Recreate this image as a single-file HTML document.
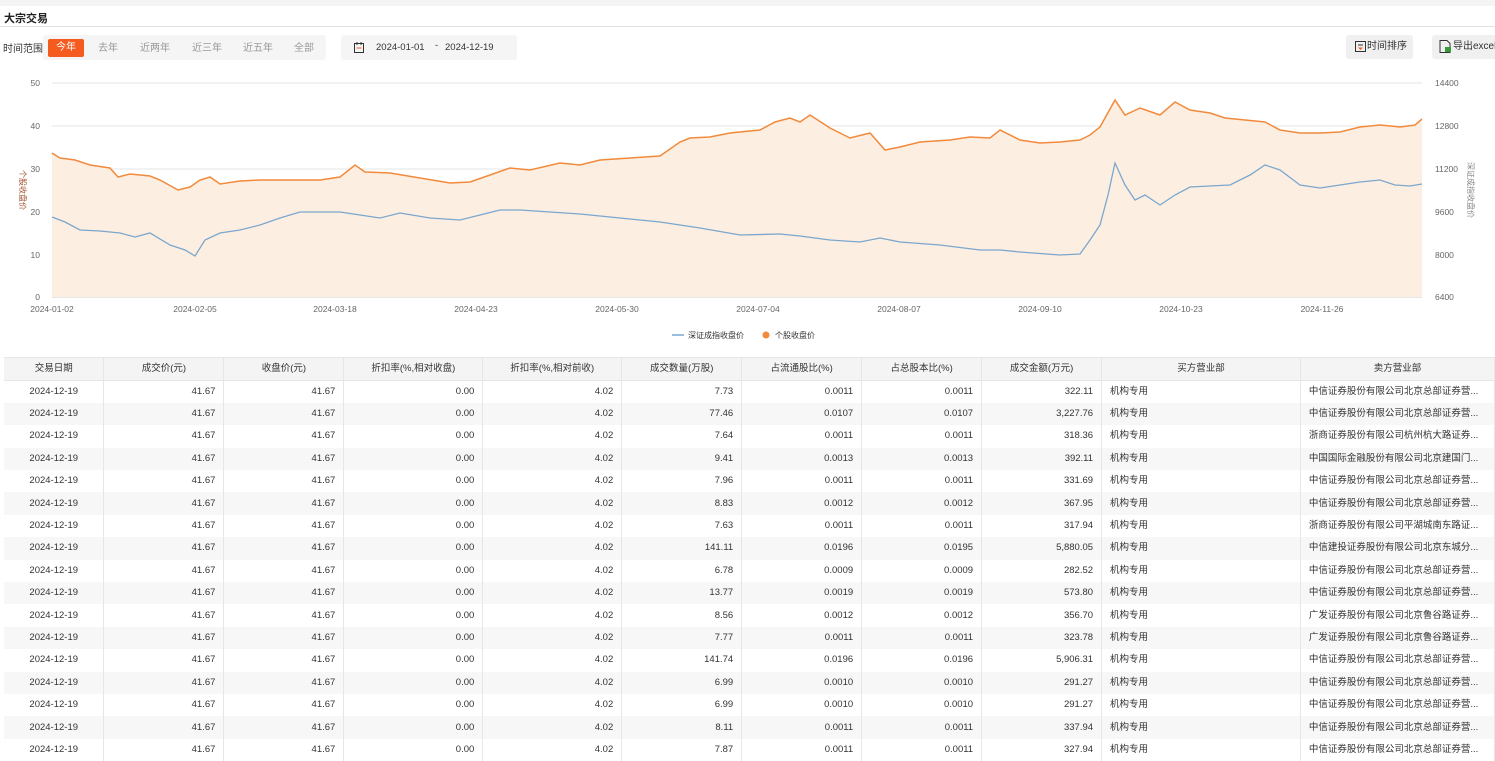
<!DOCTYPE html><html><head><meta charset="utf-8"><style>
body{margin:0;width:1495px;height:761px;overflow:hidden;background:#fff;font-family:"Liberation Sans","Noto Sans CJK SC",sans-serif;color:#333;position:relative}
.top{position:absolute;left:0;top:0;width:1495px;height:6px;background:#f4f4f4}
.title{position:absolute;left:4px;top:10px;font-size:11px;font-weight:bold;color:#222}
.hr{position:absolute;left:0;top:26px;width:1495px;height:1px;background:#e2e2e2}
.lbl{position:absolute;left:3px;top:40px;font-size:10px;color:#333}
.seg{position:absolute;left:43px;top:35px;width:283px;height:25px;background:#f5f5f5;border-radius:3px}
.seg span{position:absolute;top:8px;font-size:10px;color:#999;line-height:12px}
.seg .on{background:#f55a1e;color:#fff;border-radius:2px;top:4px;padding:3px 8px;left:5px}
.date{position:absolute;left:341px;top:35px;width:176px;height:25px;background:#f5f5f5;border-radius:3px;font-size:9.5px;color:#333}
.btn{position:absolute;top:35px;height:24px;background:#f0f0f0;border-radius:3px;font-size:10px;color:#333;line-height:24px}
table{position:absolute;left:4px;top:357px;border-collapse:collapse;font-size:9.5px;table-layout:fixed}
td,th{height:22.4px;line-height:12px;padding:0 8px;border-right:1px solid #e6e6e6;white-space:nowrap;overflow:hidden;vertical-align:middle;box-sizing:border-box}
th{font-weight:normal;background:#f4f4f4;color:#333;border-top:1px solid #e6e6e6;border-bottom:1px solid #e6e6e6;height:23px}
td{text-align:right}
td:first-child{text-align:center}
td:nth-child(10),td:nth-child(11){text-align:left}
tr:nth-child(odd) td{background:#f7f7f7}
</style></head><body>
<div class="top"></div><div class="title">大宗交易</div><div class="hr"></div>
<div class="lbl">时间范围</div>
<div class="seg"><span class="on">今年</span><span style="left:55px">去年</span><span style="left:97px">近两年</span><span style="left:149px">近三年</span><span style="left:200px">近五年</span><span style="left:251px">全部</span></div>
<div class="date"><svg style="position:absolute;left:13px;top:7px" width="10" height="11"><rect x="0.5" y="1.5" width="9" height="9" fill="none" stroke="#333"/><line x1="3" y1="0" x2="3" y2="3" stroke="#333"/><line x1="7" y1="0" x2="7" y2="3" stroke="#333"/><line x1="2.5" y1="6" x2="7.5" y2="6" stroke="#f55a1e"/></svg><span style="position:absolute;left:35px;top:7px">2024-01-01</span><span style="position:absolute;left:94px;top:5px">-</span><span style="position:absolute;left:104px;top:7px">2024-12-19</span></div>
<div class="btn" style="left:1346px;width:67px"><svg style="position:absolute;left:9px;top:6px" width="11" height="11"><rect x="0.5" y="0.5" width="10" height="10" fill="none" stroke="#333"/><line x1="3" y1="4" x2="8" y2="4" stroke="#333"/><path d="M3 6.5h5l-2.5 2.5z" fill="#f55a1e"/></svg><span style="position:absolute;left:21px">时间排序</span></div>
<div class="btn" style="left:1432px;width:70px"><svg style="position:absolute;left:7px;top:5px" width="13" height="13"><path d="M1 .5h7l3 3v9H1z" fill="none" stroke="#333"/><rect x="6" y="7" width="6" height="5" fill="#3a9a3a"/></svg><span style="position:absolute;left:21px">导出excel</span></div>
<svg style="position:absolute;left:0;top:70px" width="1495" height="280" viewBox="0 70 1495 280" font-size="8.5" fill="#666">
<g stroke="#e6e6e6"><line x1="52" y1="83" x2="1422" y2="83"/><line x1="52" y1="126" x2="1422" y2="126"/><line x1="52" y1="169" x2="1422" y2="169"/><line x1="52" y1="212" x2="1422" y2="212"/><line x1="52" y1="255" x2="1422" y2="255"/><line x1="52" y1="297" x2="1422" y2="297" stroke="#ccc"/></g>
<g text-anchor="end"><text x="40" y="86">50</text><text x="40" y="129">40</text><text x="40" y="172">30</text><text x="40" y="215">20</text><text x="40" y="258">10</text><text x="40" y="300">0</text></g>
<g><text x="1435" y="86">14400</text><text x="1435" y="129">12800</text><text x="1435" y="172">11200</text><text x="1435" y="215">9600</text><text x="1435" y="258">8000</text><text x="1435" y="300">6400</text></g>
<g text-anchor="middle"><text x="52" y="312">2024-01-02</text><text x="195" y="312">2024-02-05</text><text x="335" y="312">2024-03-18</text><text x="476" y="312">2024-04-23</text><text x="617" y="312">2024-05-30</text><text x="758" y="312">2024-07-04</text><text x="899" y="312">2024-08-07</text><text x="1040" y="312">2024-09-10</text><text x="1181" y="312">2024-10-23</text><text x="1322" y="312">2024-11-26</text></g>
<text transform="translate(20,190) rotate(90)" text-anchor="middle" font-size="8" fill="#a0522d">个股收盘价</text>
<text transform="translate(1468,190) rotate(90)" text-anchor="middle" font-size="8" fill="#888">深证成指收盘价</text>
<path d="M52 153L60 158L75 160L90 165L110 168L118 177L130 174L150 176L160 180L178 190L190 187L200 180L210 177L220 184L240 181L260 180L280 180L300 180L320 180L340 177L355 165L365 172L390 173L420 178L450 183L470 182L490 175L510 168L530 170L560 163L580 165L600 160L630 158L660 156L680 142L690 138L710 137L730 133L760 130L775 122L790 118L800 122L810 115L830 128L850 138L870 133L885 150L900 147L920 142L950 140L970 137L990 138L1000 130L1020 140L1040 143L1060 142L1080 140L1090 135L1100 127L1115 100L1125 115L1140 108L1160 115L1175 102L1190 110L1210 113L1225 118L1245 120L1265 122L1280 130L1300 133L1320 133L1340 132L1360 127L1380 125L1400 127L1415 125L1422 119L1422 297L52 297Z" fill="#fdeee2"/>
<path d="M52 153L60 158L75 160L90 165L110 168L118 177L130 174L150 176L160 180L178 190L190 187L200 180L210 177L220 184L240 181L260 180L280 180L300 180L320 180L340 177L355 165L365 172L390 173L420 178L450 183L470 182L490 175L510 168L530 170L560 163L580 165L600 160L630 158L660 156L680 142L690 138L710 137L730 133L760 130L775 122L790 118L800 122L810 115L830 128L850 138L870 133L885 150L900 147L920 142L950 140L970 137L990 138L1000 130L1020 140L1040 143L1060 142L1080 140L1090 135L1100 127L1115 100L1125 115L1140 108L1160 115L1175 102L1190 110L1210 113L1225 118L1245 120L1265 122L1280 130L1300 133L1320 133L1340 132L1360 127L1380 125L1400 127L1415 125L1422 119" fill="none" stroke="#f28a3c" stroke-width="1.5"/>
<path d="M52 217L65 222L80 230L100 231L120 233L135 237L150 233L170 245L185 250L195 256L205 240L220 233L240 230L260 225L280 218L300 212L320 212L340 212L360 215L380 218L400 213L430 218L460 220L480 215L500 210L520 210L550 212L580 214L620 218L660 222L700 228L740 235L780 234L800 236L830 240L860 242L880 238L900 242L940 245L980 250L1000 250L1020 252L1060 255L1080 254L1090 240L1100 225L1108 195L1115 163L1125 185L1135 200L1145 195L1160 205L1175 195L1190 187L1210 186L1230 185L1250 175L1265 165L1280 170L1300 185L1320 188L1340 185L1360 182L1380 180L1395 185L1410 186L1422 184" fill="none" stroke="#7ba7cc" stroke-width="1.3"/>
<line x1="672" y1="335" x2="684" y2="335" stroke="#7ba7cc" stroke-width="1.5"/><text x="688" y="338" font-size="8" fill="#333">深证成指收盘价</text>
<circle cx="766" cy="335" r="3.5" fill="#f28a3c"/><text x="775" y="338" font-size="8" fill="#333">个股收盘价</text>
</svg>
<table>
<colgroup><col style="width:100px"><col style="width:120px"><col style="width:120px"><col style="width:139px"><col style="width:139px"><col style="width:120px"><col style="width:120px"><col style="width:120px"><col style="width:120px"><col style="width:199px"><col style="width:194px"></colgroup>
<tr><th>交易日期</th><th>成交价(元)</th><th>收盘价(元)</th><th>折扣率(%,相对收盘)</th><th>折扣率(%,相对前收)</th><th>成交数量(万股)</th><th>占流通股比(%)</th><th>占总股本比(%)</th><th>成交金额(万元)</th><th>买方营业部</th><th>卖方营业部</th></tr>
<tr><td>2024-12-19</td><td>41.67</td><td>41.67</td><td>0.00</td><td>4.02</td><td>7.73</td><td>0.0011</td><td>0.0011</td><td>322.11</td><td>机构专用</td><td>中信证券股份有限公司北京总部证券营...</td></tr>
<tr><td>2024-12-19</td><td>41.67</td><td>41.67</td><td>0.00</td><td>4.02</td><td>77.46</td><td>0.0107</td><td>0.0107</td><td>3,227.76</td><td>机构专用</td><td>中信证券股份有限公司北京总部证券营...</td></tr>
<tr><td>2024-12-19</td><td>41.67</td><td>41.67</td><td>0.00</td><td>4.02</td><td>7.64</td><td>0.0011</td><td>0.0011</td><td>318.36</td><td>机构专用</td><td>浙商证券股份有限公司杭州杭大路证券...</td></tr>
<tr><td>2024-12-19</td><td>41.67</td><td>41.67</td><td>0.00</td><td>4.02</td><td>9.41</td><td>0.0013</td><td>0.0013</td><td>392.11</td><td>机构专用</td><td>中国国际金融股份有限公司北京建国门...</td></tr>
<tr><td>2024-12-19</td><td>41.67</td><td>41.67</td><td>0.00</td><td>4.02</td><td>7.96</td><td>0.0011</td><td>0.0011</td><td>331.69</td><td>机构专用</td><td>中信证券股份有限公司北京总部证券营...</td></tr>
<tr><td>2024-12-19</td><td>41.67</td><td>41.67</td><td>0.00</td><td>4.02</td><td>8.83</td><td>0.0012</td><td>0.0012</td><td>367.95</td><td>机构专用</td><td>中信证券股份有限公司北京总部证券营...</td></tr>
<tr><td>2024-12-19</td><td>41.67</td><td>41.67</td><td>0.00</td><td>4.02</td><td>7.63</td><td>0.0011</td><td>0.0011</td><td>317.94</td><td>机构专用</td><td>浙商证券股份有限公司平湖城南东路证...</td></tr>
<tr><td>2024-12-19</td><td>41.67</td><td>41.67</td><td>0.00</td><td>4.02</td><td>141.11</td><td>0.0196</td><td>0.0195</td><td>5,880.05</td><td>机构专用</td><td>中信建投证券股份有限公司北京东城分...</td></tr>
<tr><td>2024-12-19</td><td>41.67</td><td>41.67</td><td>0.00</td><td>4.02</td><td>6.78</td><td>0.0009</td><td>0.0009</td><td>282.52</td><td>机构专用</td><td>中信证券股份有限公司北京总部证券营...</td></tr>
<tr><td>2024-12-19</td><td>41.67</td><td>41.67</td><td>0.00</td><td>4.02</td><td>13.77</td><td>0.0019</td><td>0.0019</td><td>573.80</td><td>机构专用</td><td>中信证券股份有限公司北京总部证券营...</td></tr>
<tr><td>2024-12-19</td><td>41.67</td><td>41.67</td><td>0.00</td><td>4.02</td><td>8.56</td><td>0.0012</td><td>0.0012</td><td>356.70</td><td>机构专用</td><td>广发证券股份有限公司北京鲁谷路证券...</td></tr>
<tr><td>2024-12-19</td><td>41.67</td><td>41.67</td><td>0.00</td><td>4.02</td><td>7.77</td><td>0.0011</td><td>0.0011</td><td>323.78</td><td>机构专用</td><td>广发证券股份有限公司北京鲁谷路证券...</td></tr>
<tr><td>2024-12-19</td><td>41.67</td><td>41.67</td><td>0.00</td><td>4.02</td><td>141.74</td><td>0.0196</td><td>0.0196</td><td>5,906.31</td><td>机构专用</td><td>中信证券股份有限公司北京总部证券营...</td></tr>
<tr><td>2024-12-19</td><td>41.67</td><td>41.67</td><td>0.00</td><td>4.02</td><td>6.99</td><td>0.0010</td><td>0.0010</td><td>291.27</td><td>机构专用</td><td>中信证券股份有限公司北京总部证券营...</td></tr>
<tr><td>2024-12-19</td><td>41.67</td><td>41.67</td><td>0.00</td><td>4.02</td><td>6.99</td><td>0.0010</td><td>0.0010</td><td>291.27</td><td>机构专用</td><td>中信证券股份有限公司北京总部证券营...</td></tr>
<tr><td>2024-12-19</td><td>41.67</td><td>41.67</td><td>0.00</td><td>4.02</td><td>8.11</td><td>0.0011</td><td>0.0011</td><td>337.94</td><td>机构专用</td><td>中信证券股份有限公司北京总部证券营...</td></tr>
<tr><td>2024-12-19</td><td>41.67</td><td>41.67</td><td>0.00</td><td>4.02</td><td>7.87</td><td>0.0011</td><td>0.0011</td><td>327.94</td><td>机构专用</td><td>中信证券股份有限公司北京总部证券营...</td></tr>
</table>
</body></html>
